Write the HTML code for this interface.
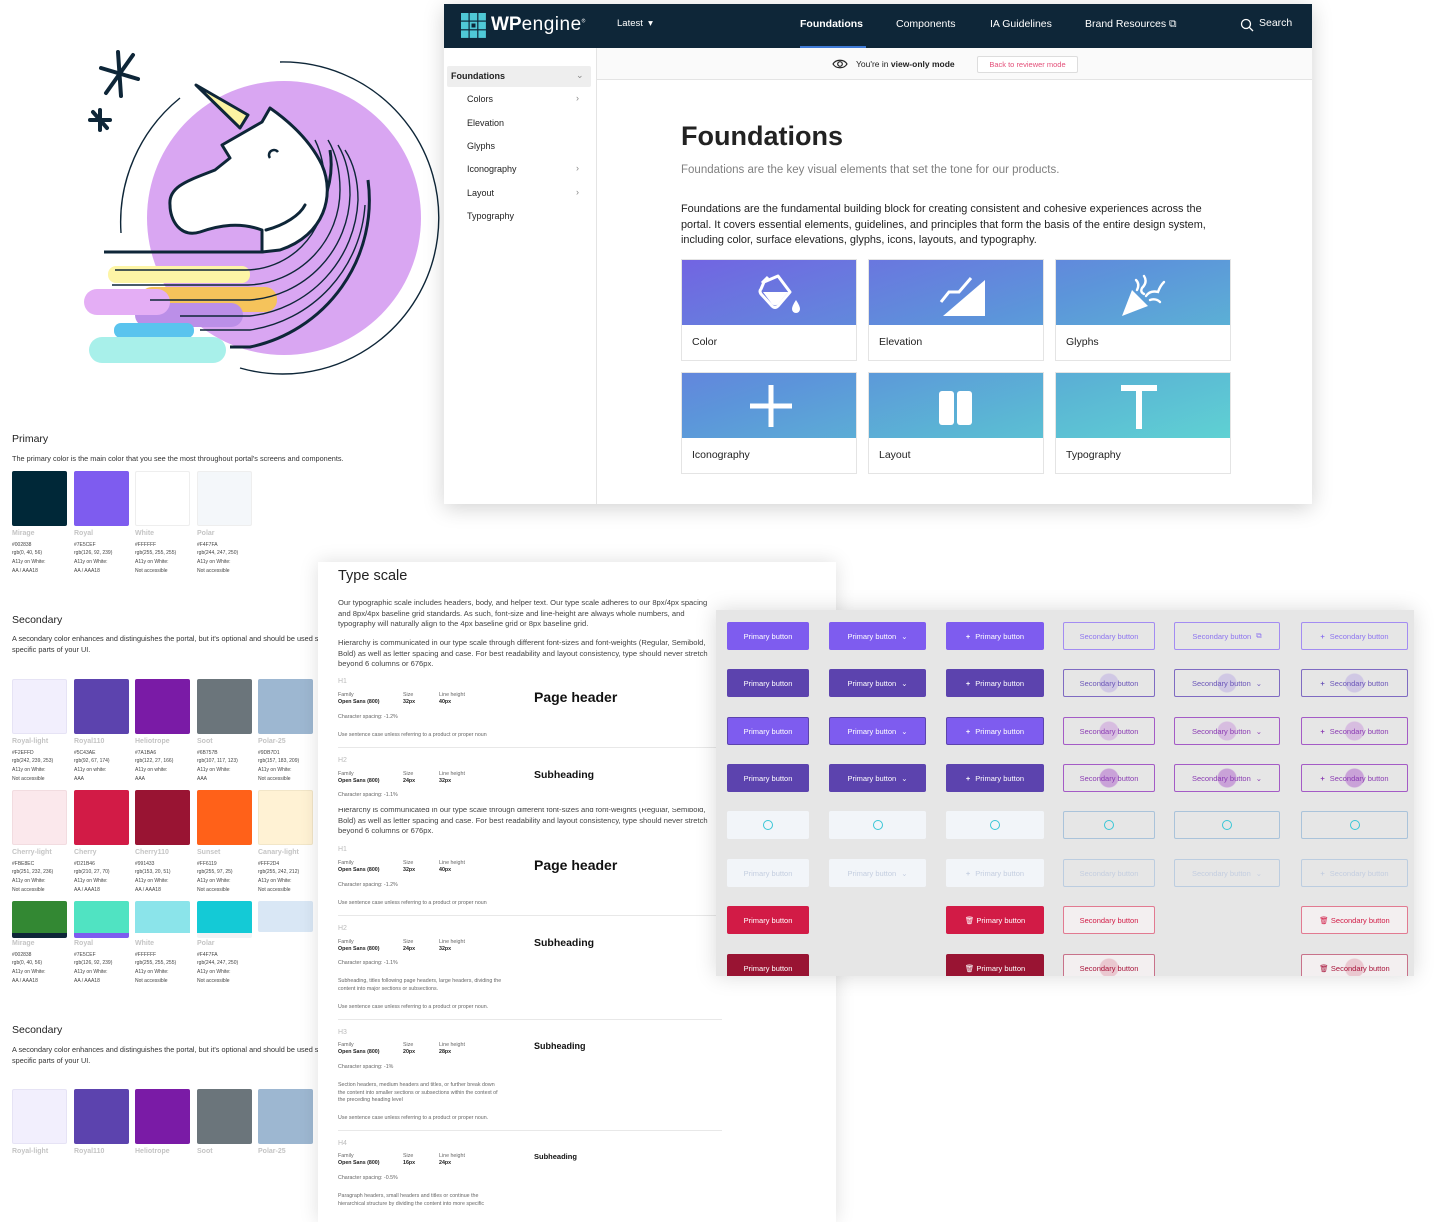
<!DOCTYPE html>
<html><head><meta charset="utf-8">
<style>
*{box-sizing:border-box;margin:0;padding:0}
body{width:1434px;height:1206px;position:relative;overflow:hidden;background:#fff;font-family:"Liberation Sans",sans-serif;color:#222}
.a{position:absolute;white-space:nowrap}
.sw{position:absolute;width:55px;height:55px;border-radius:2px}
.nm{position:absolute;font-size:7px;font-weight:bold;color:#c4c4c4}
.sm{position:absolute;font-size:5px;color:#444;line-height:7.5px}
#ts{position:absolute;left:318px;top:562px;width:518px;height:660px;background:#fff;box-shadow:0 0 18px rgba(0,0,0,.13)}
#ts .a{font-size:7.6px;color:#444}
#ts .lb{color:#bbb;font-size:7px}
#ts .sx{font-size:5.3px;color:#666}
#ts .sv{font-size:5.3px;color:#222;font-weight:bold}
#ts .dv{position:absolute;left:20px;width:384px;height:1px;background:#e8e8e8}
#bt{position:absolute;left:716px;top:610px;width:698px;height:366px;background:#e6e6e6;box-shadow:0 0 20px rgba(0,0,0,.15);overflow:hidden}
.b{position:absolute;height:28px;border-radius:2px;font-size:7.5px;display:flex;align-items:center;justify-content:center;gap:5px;white-space:nowrap}
#web{position:absolute;left:444px;top:4px;width:868px;height:500px;background:#fff;box-shadow:0 4px 20px rgba(0,0,0,.18);overflow:hidden}
.nav{position:absolute;top:0;left:0;width:868px;height:44px;background:#0e2638}
.nv{position:absolute;top:14px;color:#fff;font-size:10.5px}
.si{position:absolute;left:23px;font-size:9px;color:#222}
.tile{position:absolute;width:176px;height:102px;border:1px solid #e4e4e4;background:#fff}
.tile .g{height:65px;background:linear-gradient(to bottom right,#7264e2,#5c95da 45%,#5bb8d4 75%,#5fd2d3);background-size:550px 180px}
.tile .t{position:absolute;left:10px;top:76px;font-size:10.5px;color:#222}
</style></head><body>

<!-- Unicorn illustration -->
<svg class="a" style="left:0;top:0" width="460" height="400" viewBox="0 0 460 400">
 <circle cx="284" cy="218" r="137" fill="#d9a6f2"/>
 <path d="M280 62 A156 156 0 1 1 240 368" fill="none" stroke="#0e2638" stroke-width="1.4"/>
 <path d="M121 233 A160 160 0 0 1 180 98" fill="none" stroke="#0e2638" stroke-width="1.4"/>
 <g stroke="#0e2638" stroke-width="4" stroke-linecap="round">
  <line x1="118" y1="52" x2="121" y2="96"/><line x1="101" y1="68" x2="138" y2="79"/><line x1="106" y1="93" x2="133" y2="55"/>
  <line x1="100" y1="110" x2="100" y2="130"/><line x1="90" y1="120" x2="110" y2="120"/><line x1="93" y1="112" x2="107" y2="128"/>
 </g>
 <rect x="108" y="266" width="142" height="17" rx="8" fill="#fdf5a6"/>
 <rect x="140" y="287" width="137" height="25" rx="12" fill="#f5c35b"/>
 <rect x="135" y="303" width="108" height="24" rx="12" fill="#bb8fe8"/>
 <rect x="84" y="289" width="86" height="26" rx="13" fill="#e4aef5"/>
 <rect x="114" y="323" width="80" height="15" rx="7" fill="#5ac4ee"/>
 <rect x="89" y="337" width="137" height="26" rx="13" fill="#a8f0ea"/>
 <g fill="none" stroke="#0e2638" stroke-width="1.4">
  <path d="M115 270 H245 A80 80 0 0 0 325 190 Q325 160 315 140"/>
  <path d="M112 285 H248 A95 95 0 0 0 340 190 Q340 160 328 140"/>
  <path d="M150 300 H250 A108 108 0 0 0 350 195 Q350 165 338 145"/>
  <path d="M180 316 H250 A122 122 0 0 0 358 200 Q358 170 345 150"/>
  <path d="M200 330 H250 A135 135 0 0 0 365 205"/>
 </g>
 <path d="M104 252 H262 A90 90 0 0 0 330 150 M230 347 H250 A150 150 0 0 0 368 180" fill="none" stroke="#0e2638" stroke-width="3"/>
 <path d="M262 252 V230 C240 222 220 225 200 232 C180 238 170 220 170 205 C168 186 190 180 215 170 L230 158 L222 145 L262 122 L270 108 C290 122 310 140 322 165 C335 195 325 235 280 250 Z" fill="#fff" stroke="#0e2638" stroke-width="3" stroke-linejoin="round"/>
 <path d="M266 230 C285 225 300 215 305 205" fill="none" stroke="#0e2638" stroke-width="3" stroke-linecap="round"/>
 <path d="M270 158 A5 5 0 0 1 278 152" fill="none" stroke="#0e2638" stroke-width="2.5"/>
 <path d="M196 85 L248 115 L240 128 Z" fill="#fbf3a2" stroke="#0e2638" stroke-width="3" stroke-linejoin="round"/>
</svg>

<!-- Color panel -->
<div class="a" style="left:12px;top:433px;font-size:10.5px;color:#222">Primary</div>
<div class="a" style="left:12px;top:454px;font-size:7.3px;color:#333">The primary color is the main color that you see the most throughout portal's screens and components.</div>
<div class="sw" style="left:12px;top:471px;background:#002838"></div>
<div class="sw" style="left:74px;top:471px;background:#7e5cef"></div>
<div class="sw" style="left:135px;top:471px;background:#fff;border:1px solid #eee"></div>
<div class="sw" style="left:197px;top:471px;background:#f4f7fa;border:1px solid #eee"></div>
<div class="nm" style="left:12px;top:530px">Mirage</div><div class="nm" style="left:74px;top:530px">Royal</div><div class="nm" style="left:135px;top:530px">White</div><div class="nm" style="left:197px;top:530px">Polar</div>
<div class="sm" style="left:12px;top:542px">#002838<br>rgb(0, 40, 56)<br><span style="line-height:11px">A11y on White:</span><br>AA / AAA18</div>
<div class="sm" style="left:74px;top:542px">#7E5CEF<br>rgb(126, 92, 239)<br><span style="line-height:11px">A11y on White:</span><br>AA / AAA18</div>
<div class="sm" style="left:135px;top:542px">#FFFFFF<br>rgb(255, 255, 255)<br><span style="line-height:11px">A11y on White:</span><br>Not accessible</div>
<div class="sm" style="left:197px;top:542px">#F4F7FA<br>rgb(244, 247, 250)<br><span style="line-height:11px">A11y on White:</span><br>Not accessible</div>

<div class="a" style="left:12px;top:614px;font-size:10.5px;color:#222">Secondary</div>
<div class="a" style="left:12px;top:634px;font-size:7.3px;color:#333;line-height:10.5px">A secondary color enhances and distinguishes the portal, but it's optional and should be used sp<br>specific parts of your UI.</div>
<div class="sw" style="left:12px;top:679px;background:#f2effd;border:1px solid #e6e3f5"></div>
<div class="sw" style="left:74px;top:679px;background:#5c43ae"></div>
<div class="sw" style="left:135px;top:679px;background:#7a1ba6"></div>
<div class="sw" style="left:197px;top:679px;background:#6b757b"></div>
<div class="sw" style="left:258px;top:679px;background:#9db7d1"></div>
<div class="nm" style="left:12px;top:738px">Royal-light</div><div class="nm" style="left:74px;top:738px">Royal110</div><div class="nm" style="left:135px;top:738px">Heliotrope</div><div class="nm" style="left:197px;top:738px">Soot</div><div class="nm" style="left:258px;top:738px">Polar-25</div>
<div class="sm" style="left:12px;top:750px">#F2EFFD<br>rgb(242, 239, 253)<br><span style="line-height:11px">A11y on White:</span><br>Not accessible</div>
<div class="sm" style="left:74px;top:750px">#5C43AE<br>rgb(92, 67, 174)<br><span style="line-height:11px">A11y on white:</span><br>AAA</div>
<div class="sm" style="left:135px;top:750px">#7A1BA6<br>rgb(122, 27, 166)<br><span style="line-height:11px">A11y on white:</span><br>AAA</div>
<div class="sm" style="left:197px;top:750px">#6B757B<br>rgb(107, 117, 123)<br><span style="line-height:11px">A11y on White:</span><br>AAA</div>
<div class="sm" style="left:258px;top:750px">#9DB7D1<br>rgb(157, 183, 209)<br><span style="line-height:11px">A11y on White:</span><br>Not accessible</div>

<div class="sw" style="left:12px;top:790px;background:#fbe8ec;border:1px solid #f2dce0"></div>
<div class="sw" style="left:74px;top:790px;background:#d21b46"></div>
<div class="sw" style="left:135px;top:790px;background:#991433"></div>
<div class="sw" style="left:197px;top:790px;background:#ff6119"></div>
<div class="sw" style="left:258px;top:790px;background:#fff2d4;border:1px solid #f2e6c8"></div>
<div class="nm" style="left:12px;top:849px">Cherry-light</div><div class="nm" style="left:74px;top:849px">Cherry</div><div class="nm" style="left:135px;top:849px">Cherry110</div><div class="nm" style="left:197px;top:849px">Sunset</div><div class="nm" style="left:258px;top:849px">Canary-light</div>
<div class="sm" style="left:12px;top:861px">#FBE8EC<br>rgb(251, 232, 236)<br><span style="line-height:11px">A11y on White:</span><br>Not accessible</div>
<div class="sm" style="left:74px;top:861px">#D21B46<br>rgb(210, 27, 70)<br><span style="line-height:11px">A11y on White:</span><br>AA / AAA18</div>
<div class="sm" style="left:135px;top:861px">#991433<br>rgb(153, 20, 51)<br><span style="line-height:11px">A11y on White:</span><br>AA / AAA18</div>
<div class="sm" style="left:197px;top:861px">#FF6119<br>rgb(255, 97, 25)<br><span style="line-height:11px">A11y on White:</span><br>Not accessible</div>
<div class="sm" style="left:258px;top:861px">#FFF2D4<br>rgb(255, 242, 212)<br><span style="line-height:11px">A11y on White:</span><br>Not accessible</div>

<div class="sw" style="left:12px;top:901px;height:37px;background:linear-gradient(#338833 86%,#0e2638 86%)"></div>
<div class="sw" style="left:74px;top:901px;height:37px;background:linear-gradient(#50e3c2 86%,#7e5cef 86%)"></div>
<div class="sw" style="left:135px;top:901px;height:37px;background:linear-gradient(#8be4ea 86%,#fff 86%)"></div>
<div class="sw" style="left:197px;top:901px;height:37px;background:linear-gradient(#14cad6 86%,#f0f3f5 86%)"></div>
<div class="sw" style="left:258px;top:901px;height:31px;background:#d9e7f5"></div>
<div class="nm" style="left:12px;top:940px">Mirage</div><div class="nm" style="left:74px;top:940px">Royal</div><div class="nm" style="left:135px;top:940px">White</div><div class="nm" style="left:197px;top:940px">Polar</div>
<div class="sm" style="left:12px;top:952px">#002838<br>rgb(0, 40, 56)<br><span style="line-height:11px">A11y on White:</span><br>AA / AAA18</div>
<div class="sm" style="left:74px;top:952px">#7E5CEF<br>rgb(126, 92, 239)<br><span style="line-height:11px">A11y on White:</span><br>AA / AAA18</div>
<div class="sm" style="left:135px;top:952px">#FFFFFF<br>rgb(255, 255, 255)<br><span style="line-height:11px">A11y on White:</span><br>Not accessible</div>
<div class="sm" style="left:197px;top:952px">#F4F7FA<br>rgb(244, 247, 250)<br><span style="line-height:11px">A11y on White:</span><br>Not accessible</div>

<div class="a" style="left:12px;top:1024px;font-size:10.5px;color:#222">Secondary</div>
<div class="a" style="left:12px;top:1045px;font-size:7.3px;color:#333;line-height:10.5px">A secondary color enhances and distinguishes the portal, but it's optional and should be used sp<br>specific parts of your UI.</div>
<div class="sw" style="left:12px;top:1089px;background:#f2effd;border:1px solid #e6e3f5"></div>
<div class="sw" style="left:74px;top:1089px;background:#5c43ae"></div>
<div class="sw" style="left:135px;top:1089px;background:#7a1ba6"></div>
<div class="sw" style="left:197px;top:1089px;background:#6b757b"></div>
<div class="sw" style="left:258px;top:1089px;background:#9db7d1"></div>
<div class="nm" style="left:12px;top:1148px">Royal-light</div><div class="nm" style="left:74px;top:1148px">Royal110</div><div class="nm" style="left:135px;top:1148px">Heliotrope</div><div class="nm" style="left:197px;top:1148px">Soot</div><div class="nm" style="left:258px;top:1148px">Polar-25</div>

<!-- Type scale panel -->
<div id="ts">
 <div class="a" style="left:20px;top:6px;font-size:14.5px;color:#222">Type scale</div>
 <div class="a" style="left:20px;top:36px;line-height:10.6px">Our typographic scale includes headers, body, and helper text. Our type scale adheres to our 8px/4px spacing<br>and 8px/4px baseline grid standards. As such, font-size and line-height are always whole numbers, and<br>typography will naturally align to the 4px baseline grid or 8px baseline grid.</div>
 <div class="a" style="left:20px;top:76px;line-height:10.6px">Hierarchy is communicated in our type scale through different font-sizes and font-weights (Regular, Semibold,<br>Bold) as well as letter spacing and case. For best readability and layout consistency, type should never stretch<br>beyond 6 columns or 676px.</div>

 <div class="a lb" style="top:116px;left:20px">H1</div>
 <div class="a sx" style="top:130px;left:20px">Family</div><div class="a sv" style="top:137px;left:20px">Open Sans (800)</div>
 <div class="a sx" style="top:130px;left:85px">Size</div><div class="a sv" style="top:137px;left:85px">32px</div>
 <div class="a sx" style="top:130px;left:121px">Line height</div><div class="a sv" style="top:137px;left:121px">40px</div>
 <div class="a" style="top:127px;left:216px;font-size:14px;font-weight:bold;color:#111">Page header</div>
 <div class="a sx" style="top:152px;left:20px">Character spacing: -1.2%</div>
 <div class="a sx" style="top:170px;left:20px">Use sentence case unless referring to a product or proper noun</div>
 <div class="dv" style="top:185px"></div>

 <div class="a lb" style="top:195px;left:20px">H2</div>
 <div class="a sx" style="top:209px;left:20px">Family</div><div class="a sv" style="top:216px;left:20px">Open Sans (800)</div>
 <div class="a sx" style="top:209px;left:85px">Size</div><div class="a sv" style="top:216px;left:85px">24px</div>
 <div class="a sx" style="top:209px;left:121px">Line height</div><div class="a sv" style="top:216px;left:121px">32px</div>
 <div class="a" style="top:207px;left:216px;font-size:10.5px;font-weight:bold;color:#111">Subheading</div>
 <div class="a sx" style="top:230px;left:20px">Character spacing: -1.1%</div>

 <div class="a" style="left:20px;top:243px;line-height:10.6px;clip-path:inset(3px 0 0 0)">Hierarchy is communicated in our type scale through different font-sizes and font-weights (Regular, Semibold,<br>Bold) as well as letter spacing and case. For best readability and layout consistency, type should never stretch<br>beyond 6 columns or 676px.</div>
 <div class="a lb" style="top:284px;left:20px">H1</div>
 <div class="a sx" style="top:298px;left:20px">Family</div><div class="a sv" style="top:305px;left:20px">Open Sans (800)</div>
 <div class="a sx" style="top:298px;left:85px">Size</div><div class="a sv" style="top:305px;left:85px">32px</div>
 <div class="a sx" style="top:298px;left:121px">Line height</div><div class="a sv" style="top:305px;left:121px">40px</div>
 <div class="a" style="top:295px;left:216px;font-size:14px;font-weight:bold;color:#111">Page header</div>
 <div class="a sx" style="top:320px;left:20px">Character spacing: -1.2%</div>
 <div class="a sx" style="top:338px;left:20px">Use sentence case unless referring to a product or proper noun</div>
 <div class="dv" style="top:353px"></div>

 <div class="a lb" style="top:363px;left:20px">H2</div>
 <div class="a sx" style="top:377px;left:20px">Family</div><div class="a sv" style="top:384px;left:20px">Open Sans (800)</div>
 <div class="a sx" style="top:377px;left:85px">Size</div><div class="a sv" style="top:384px;left:85px">24px</div>
 <div class="a sx" style="top:377px;left:121px">Line height</div><div class="a sv" style="top:384px;left:121px">32px</div>
 <div class="a" style="top:375px;left:216px;font-size:10.5px;font-weight:bold;color:#111">Subheading</div>
 <div class="a sx" style="top:398px;left:20px">Character spacing: -1.1%</div>
 <div class="a sx" style="top:416px;left:20px;line-height:7.5px">Subheading, titles following page headers, large headers, dividing the<br>content into major sections or subsections.</div>
 <div class="a sx" style="top:442px;left:20px">Use sentence case unless referring to a product or proper noun.</div>
 <div class="dv" style="top:457px"></div>

 <div class="a lb" style="top:467px;left:20px">H3</div>
 <div class="a sx" style="top:480px;left:20px">Family</div><div class="a sv" style="top:487px;left:20px">Open Sans (800)</div>
 <div class="a sx" style="top:480px;left:85px">Size</div><div class="a sv" style="top:487px;left:85px">20px</div>
 <div class="a sx" style="top:480px;left:121px">Line height</div><div class="a sv" style="top:487px;left:121px">28px</div>
 <div class="a" style="top:479px;left:216px;font-size:9px;font-weight:bold;color:#111">Subheading</div>
 <div class="a sx" style="top:502px;left:20px">Character spacing: -1%</div>
 <div class="a sx" style="top:520px;left:20px;line-height:7.5px">Section headers, medium headers and titles, or further break down<br>the content into smaller sections or subsections within the context of<br>the preceding heading level</div>
 <div class="a sx" style="top:553px;left:20px">Use sentence case unless referring to a product or proper noun.</div>
 <div class="dv" style="top:568px"></div>

 <div class="a lb" style="top:578px;left:20px">H4</div>
 <div class="a sx" style="top:591px;left:20px">Family</div><div class="a sv" style="top:598px;left:20px">Open Sans (800)</div>
 <div class="a sx" style="top:591px;left:85px">Size</div><div class="a sv" style="top:598px;left:85px">16px</div>
 <div class="a sx" style="top:591px;left:121px">Line height</div><div class="a sv" style="top:598px;left:121px">24px</div>
 <div class="a" style="top:590px;left:216px;font-size:7.5px;font-weight:bold;color:#111">Subheading</div>
 <div class="a sx" style="top:613px;left:20px">Character spacing: -0.5%</div>
 <div class="a sx" style="top:631px;left:20px;line-height:7.5px">Paragraph headers, small headers and titles or continue the<br>hierarchical structure by dividing the content into more specific</div>
</div>

<!-- Buttons panel -->
<div id="bt">
<div class="b" style="left:11px;top:12px;width:82px;background:#7e5cef;color:#fff">Primary button</div>
<div class="b" style="left:113px;top:12px;width:97px;background:#7e5cef;color:#fff">Primary button <span>⌄</span></div>
<div class="b" style="left:230px;top:12px;width:98px;background:#7e5cef;color:#fff"><b>+</b> Primary button</div>
<div class="b" style="left:347px;top:12px;width:92px;border:1.5px solid #a38cf2;color:#8d74ef">Secondary button</div>
<div class="b" style="left:458px;top:12px;width:106px;border:1.5px solid #a38cf2;color:#8d74ef">Secondary button <span>⧉</span></div>
<div class="b" style="left:585px;top:12px;width:107px;border:1.5px solid #a38cf2;color:#8d74ef"><b>+</b> Secondary button</div>
<div class="b" style="left:11px;top:59px;width:82px;background:#5c43ae;color:#fff">Primary button</div>
<div class="b" style="left:113px;top:59px;width:97px;background:#5c43ae;color:#fff">Primary button <span>⌄</span></div>
<div class="b" style="left:230px;top:59px;width:98px;background:#5c43ae;color:#fff"><b>+</b> Primary button</div>
<div class="b" style="left:347px;top:59px;width:92px;border:1.5px solid #7f6bc2;color:#6a55b8;background:radial-gradient(circle at 50% 50%,#d0c8e4 9px,transparent 10px)">Secondary button</div>
<div class="b" style="left:458px;top:59px;width:106px;border:1.5px solid #7f6bc2;color:#6a55b8;background:radial-gradient(circle at 50% 50%,#d0c8e4 9px,transparent 10px)">Secondary button <span>⌄</span></div>
<div class="b" style="left:585px;top:59px;width:107px;border:1.5px solid #7f6bc2;color:#6a55b8;background:radial-gradient(circle at 50% 50%,#d0c8e4 9px,transparent 10px)"><b>+</b> Secondary button</div>
<div class="b" style="left:11px;top:107px;width:82px;background:#7e5cef;color:#fff;border:1.5px solid #5c43ae">Primary button</div>
<div class="b" style="left:113px;top:107px;width:97px;background:#7e5cef;color:#fff;border:1.5px solid #5c43ae">Primary button <span>⌄</span></div>
<div class="b" style="left:230px;top:107px;width:98px;background:#7e5cef;color:#fff;border:1.5px solid #5c43ae"><b>+</b> Primary button</div>
<div class="b" style="left:347px;top:107px;width:92px;border:1.5px solid #a45bc6;color:#8b3db3;background:radial-gradient(circle at 50% 50%,#d7bde0 9px,transparent 10px)">Secondary button</div>
<div class="b" style="left:458px;top:107px;width:106px;border:1.5px solid #a45bc6;color:#8b3db3;background:radial-gradient(circle at 50% 50%,#d7bde0 9px,transparent 10px)">Secondary button <span>⌄</span></div>
<div class="b" style="left:585px;top:107px;width:107px;border:1.5px solid #a45bc6;color:#8b3db3;background:radial-gradient(circle at 50% 50%,#d7bde0 9px,transparent 10px)"><b>+</b> Secondary button</div>
<div class="b" style="left:11px;top:154px;width:82px;background:#5c43ae;color:#fff">Primary button</div>
<div class="b" style="left:113px;top:154px;width:97px;background:#5c43ae;color:#fff">Primary button <span>⌄</span></div>
<div class="b" style="left:230px;top:154px;width:98px;background:#5c43ae;color:#fff"><b>+</b> Primary button</div>
<div class="b" style="left:347px;top:154px;width:92px;border:1.5px solid #a45bc6;color:#8b3db3;background:radial-gradient(circle at 50% 50%,#c9a2d8 9px,transparent 10px)">Secondary button</div>
<div class="b" style="left:458px;top:154px;width:106px;border:1.5px solid #a45bc6;color:#8b3db3;background:radial-gradient(circle at 50% 50%,#c9a2d8 9px,transparent 10px)">Secondary button <span>⌄</span></div>
<div class="b" style="left:585px;top:154px;width:107px;border:1.5px solid #a45bc6;color:#8b3db3;background:radial-gradient(circle at 50% 50%,#c9a2d8 9px,transparent 10px)"><b>+</b> Secondary button</div>
<div class="b" style="left:11px;top:201px;width:82px;background:#f2f5f9"><span style="width:10px;height:10px;border:1.5px solid #39c6d6;border-radius:50%"></span></div>
<div class="b" style="left:113px;top:201px;width:97px;background:#f2f5f9"><span style="width:10px;height:10px;border:1.5px solid #39c6d6;border-radius:50%"></span></div>
<div class="b" style="left:230px;top:201px;width:98px;background:#f2f5f9"><span style="width:10px;height:10px;border:1.5px solid #39c6d6;border-radius:50%"></span></div>
<div class="b" style="left:347px;top:201px;width:92px;border:1.5px solid #aac3da"><span style="width:10px;height:10px;border:1.5px solid #39c6d6;border-radius:50%"></span></div>
<div class="b" style="left:458px;top:201px;width:106px;border:1.5px solid #aac3da"><span style="width:10px;height:10px;border:1.5px solid #39c6d6;border-radius:50%"></span></div>
<div class="b" style="left:585px;top:201px;width:107px;border:1.5px solid #aac3da"><span style="width:10px;height:10px;border:1.5px solid #39c6d6;border-radius:50%"></span></div>
<div class="b" style="left:11px;top:249px;width:82px;background:#f2f5f9;color:#c4cee0">Primary button</div>
<div class="b" style="left:113px;top:249px;width:97px;background:#f2f5f9;color:#c4cee0">Primary button <span>⌄</span></div>
<div class="b" style="left:230px;top:249px;width:98px;background:#f2f5f9;color:#c4cee0"><b>+</b> Primary button</div>
<div class="b" style="left:347px;top:249px;width:92px;border:1.5px solid #bccde0;color:#c4cee0">Secondary button</div>
<div class="b" style="left:458px;top:249px;width:106px;border:1.5px solid #bccde0;color:#c4cee0">Secondary button <span>⌄</span></div>
<div class="b" style="left:585px;top:249px;width:107px;border:1.5px solid #bccde0;color:#c4cee0"><b>+</b> Secondary button</div>
<div class="b" style="left:11px;top:296px;width:82px;background:#d21b46;color:#fff">Primary button</div>
<div class="b" style="left:230px;top:296px;width:98px;background:#d21b46;color:#fff">🗑 Primary button</div>
<div class="b" style="left:347px;top:296px;width:92px;border:1.5px solid #e27a91;color:#d21b46;background:#f3eff0">Secondary button</div>
<div class="b" style="left:585px;top:296px;width:107px;border:1.5px solid #e27a91;color:#d21b46;background:#f3eff0">🗑 Secondary button</div>
<div class="b" style="left:11px;top:344px;width:82px;background:#991433;color:#fff">Primary button</div>
<div class="b" style="left:230px;top:344px;width:98px;background:#991433;color:#fff">🗑 Primary button</div>
<div class="b" style="left:347px;top:344px;width:92px;border:1.5px solid #c8728a;color:#a8143a;background:radial-gradient(circle at 50% 50%,#eac8d0 9px,#f3eff0 10px)">Secondary button</div>
<div class="b" style="left:585px;top:344px;width:107px;border:1.5px solid #c8728a;color:#a8143a;background:radial-gradient(circle at 50% 50%,#eac8d0 9px,#f3eff0 10px)">🗑 Secondary button</div>
</div>

<!-- Website panel -->
<div id="web">
 <div class="nav">
  <svg class="a" style="left:17px;top:9px" width="25" height="25" viewBox="0 0 25 25">
   <g fill="#4fc8d6"><rect x="0" y="0" width="7.5" height="7.5"/><rect x="8.7" y="0" width="7.5" height="7.5"/><rect x="17.4" y="0" width="7.5" height="7.5"/><rect x="0" y="8.7" width="7.5" height="7.5"/><rect x="17.4" y="8.7" width="7.5" height="7.5"/><rect x="0" y="17.4" width="7.5" height="7.5"/><rect x="8.7" y="17.4" width="7.5" height="7.5"/><rect x="17.4" y="17.4" width="7.5" height="7.5"/><rect x="8.7" y="8.7" width="7.5" height="7.5"/></g>
   <rect x="10.5" y="10.5" width="4" height="4" fill="#0e2638"/>
  </svg>
  <div class="a" style="left:47px;top:10px;color:#fff;font-size:19px"><b style="font-weight:900">WP</b><span style="font-weight:300;letter-spacing:.5px">engine</span><sup style="font-size:5px">®</sup></div>
  <div class="nv" style="left:173px;font-size:9.5px">Latest &nbsp;▾</div>
  <div class="nv" style="left:356px;font-weight:bold">Foundations</div>
  <div style="position:absolute;left:356px;top:42px;width:66px;height:2px;background:#3e7ad6"></div>
  <div class="nv" style="left:452px">Components</div>
  <div class="nv" style="left:546px">IA Guidelines</div>
  <div class="nv" style="left:641px">Brand Resources ⧉</div>
  <svg class="a" style="left:796px;top:14px" width="14" height="14" viewBox="0 0 14 14"><circle cx="6" cy="6" r="4.5" fill="none" stroke="#fff" stroke-width="1.3"/><line x1="9.3" y1="9.3" x2="13" y2="13" stroke="#fff" stroke-width="1.3"/></svg>
  <div class="nv" style="left:815px;top:13px">Search</div>
 </div>
 <div style="position:absolute;left:152px;top:44px;width:1px;height:456px;background:#e4e4e4"></div>
 <div style="position:absolute;left:3px;top:62px;width:144px;height:21px;background:#eeeeee;border-radius:2px"></div>
 <div class="si" style="left:7px;top:67px;font-weight:bold">Foundations</div><div class="si" style="left:132px;top:66px;color:#888">⌄</div>
 <div class="si" style="top:90px">Colors</div><div class="si" style="left:132px;top:89px;color:#888">›</div>
 <div class="si" style="top:114px">Elevation</div>
 <div class="si" style="top:137px">Glyphs</div>
 <div class="si" style="top:160px">Iconography</div><div class="si" style="left:132px;top:159px;color:#888">›</div>
 <div class="si" style="top:184px">Layout</div><div class="si" style="left:132px;top:183px;color:#888">›</div>
 <div class="si" style="top:207px">Typography</div>
 <div style="position:absolute;left:153px;top:44px;width:715px;height:32px;background:#fafafa;border-bottom:1px solid #e4e4e4"></div>
 <svg class="a" style="left:388px;top:53px" width="16" height="14" viewBox="0 0 16 14"><path d="M1 7 C4 2 12 2 15 7 C12 12 4 12 1 7Z" fill="none" stroke="#222" stroke-width="1.2"/><circle cx="8" cy="7" r="2.3" fill="none" stroke="#222" stroke-width="1.2"/></svg>
 <div class="a" style="left:412px;top:55px;font-size:8.5px;color:#222">You're in <b>view-only mode</b></div>
 <div class="a" style="left:533px;top:52px;width:101px;height:17px;border:1px solid #ddd;background:#fff;border-radius:2px;font-size:7.5px;color:#e4507a;text-align:center;line-height:15px">Back to reviewer mode</div>
 <div class="a" style="left:237px;top:117px;font-size:27px;font-weight:bold;color:#222">Foundations</div>
 <div class="a" style="left:237px;top:160px;font-size:11.5px;color:#808080">Foundations are the key visual elements that set the tone for our products.</div>
 <div class="a" style="left:237px;top:198px;font-size:10.9px;color:#222;line-height:15.5px">Foundations are the fundamental building block for creating consistent and cohesive experiences across the<br>portal. It covers essential elements, guidelines, and principles that form the basis of the entire design system,<br>including color, surface elevations, glyphs, icons, layouts, and typography.</div>
 <div class="tile" style="left:237px;top:255px"><div class="g" style="background-position:0 0"></div><div class="t">Color</div>
  <svg class="a" style="left:76px;top:14px" width="44" height="42" viewBox="0 0 44 42"><path d="M10 3 L4 9 M6 8 L20 2 L32 18 L20 32 Q17 35 14 32 L3 20 Q1 17 3 15 Z" fill="none" stroke="#fff" stroke-width="3" stroke-linejoin="round"/><path d="M5 18 H30 L20 30 Q17 33 14 30 Z" fill="#fff"/><path d="M38 26 Q34 32 34 35 A4 4 0 0 0 42 35 Q42 32 38 26Z" fill="#fff"/></svg></div>
 <div class="tile" style="left:424px;top:255px"><div class="g" style="background-position:-187px 0"></div><div class="t">Elevation</div>
  <svg class="a" style="left:70px;top:14px" width="48" height="44" viewBox="0 0 48 44"><path d="M2 28 L10 18 H20 L32 4" fill="none" stroke="#fff" stroke-width="3"/><path d="M4 42 L46 6 V42Z" fill="#fff"/></svg></div>
 <div class="tile" style="left:611px;top:255px"><div class="g" style="background-position:-374px 0"></div><div class="t">Glyphs</div>
  <svg class="a" style="left:64px;top:12px" width="50" height="46" viewBox="0 0 50 46"><path d="M2 44 L12 18 L28 34Z" fill="#fff"/><g fill="none" stroke="#fff" stroke-width="2.4" stroke-linecap="round"><path d="M16 8 Q20 12 17 18"/><path d="M24 4 Q28 10 22 16 Q20 20 24 22"/><path d="M26 24 Q30 18 38 20 Q40 14 44 10"/><path d="M30 28 Q36 26 40 30"/></g></svg></div>
 <div class="tile" style="left:237px;top:368px"><div class="g" style="background-position:0 -113px"></div><div class="t">Iconography</div>
  <svg class="a" style="left:66px;top:10px" width="46" height="46" viewBox="0 0 46 46"><rect x="20.5" y="2" width="5" height="42" fill="#fff"/><rect x="2" y="20.5" width="42" height="5" fill="#fff"/></svg></div>
 <div class="tile" style="left:424px;top:368px"><div class="g" style="background-position:-187px -113px"></div><div class="t">Layout</div>
  <svg class="a" style="left:69px;top:17px" width="38" height="36" viewBox="0 0 38 36"><rect x="1" y="1" width="15" height="34" rx="3" fill="#fff"/><rect x="19" y="1" width="15" height="34" rx="3" fill="#fff"/></svg></div>
 <div class="tile" style="left:611px;top:368px"><div class="g" style="background-position:-374px -113px"></div><div class="t">Typography</div>
  <svg class="a" style="left:64px;top:10px" width="40" height="48" viewBox="0 0 40 48"><rect x="1" y="2" width="36" height="6" fill="#fff"/><rect x="16" y="2" width="6" height="44" fill="#fff"/></svg></div>
</div>
</body></html>
